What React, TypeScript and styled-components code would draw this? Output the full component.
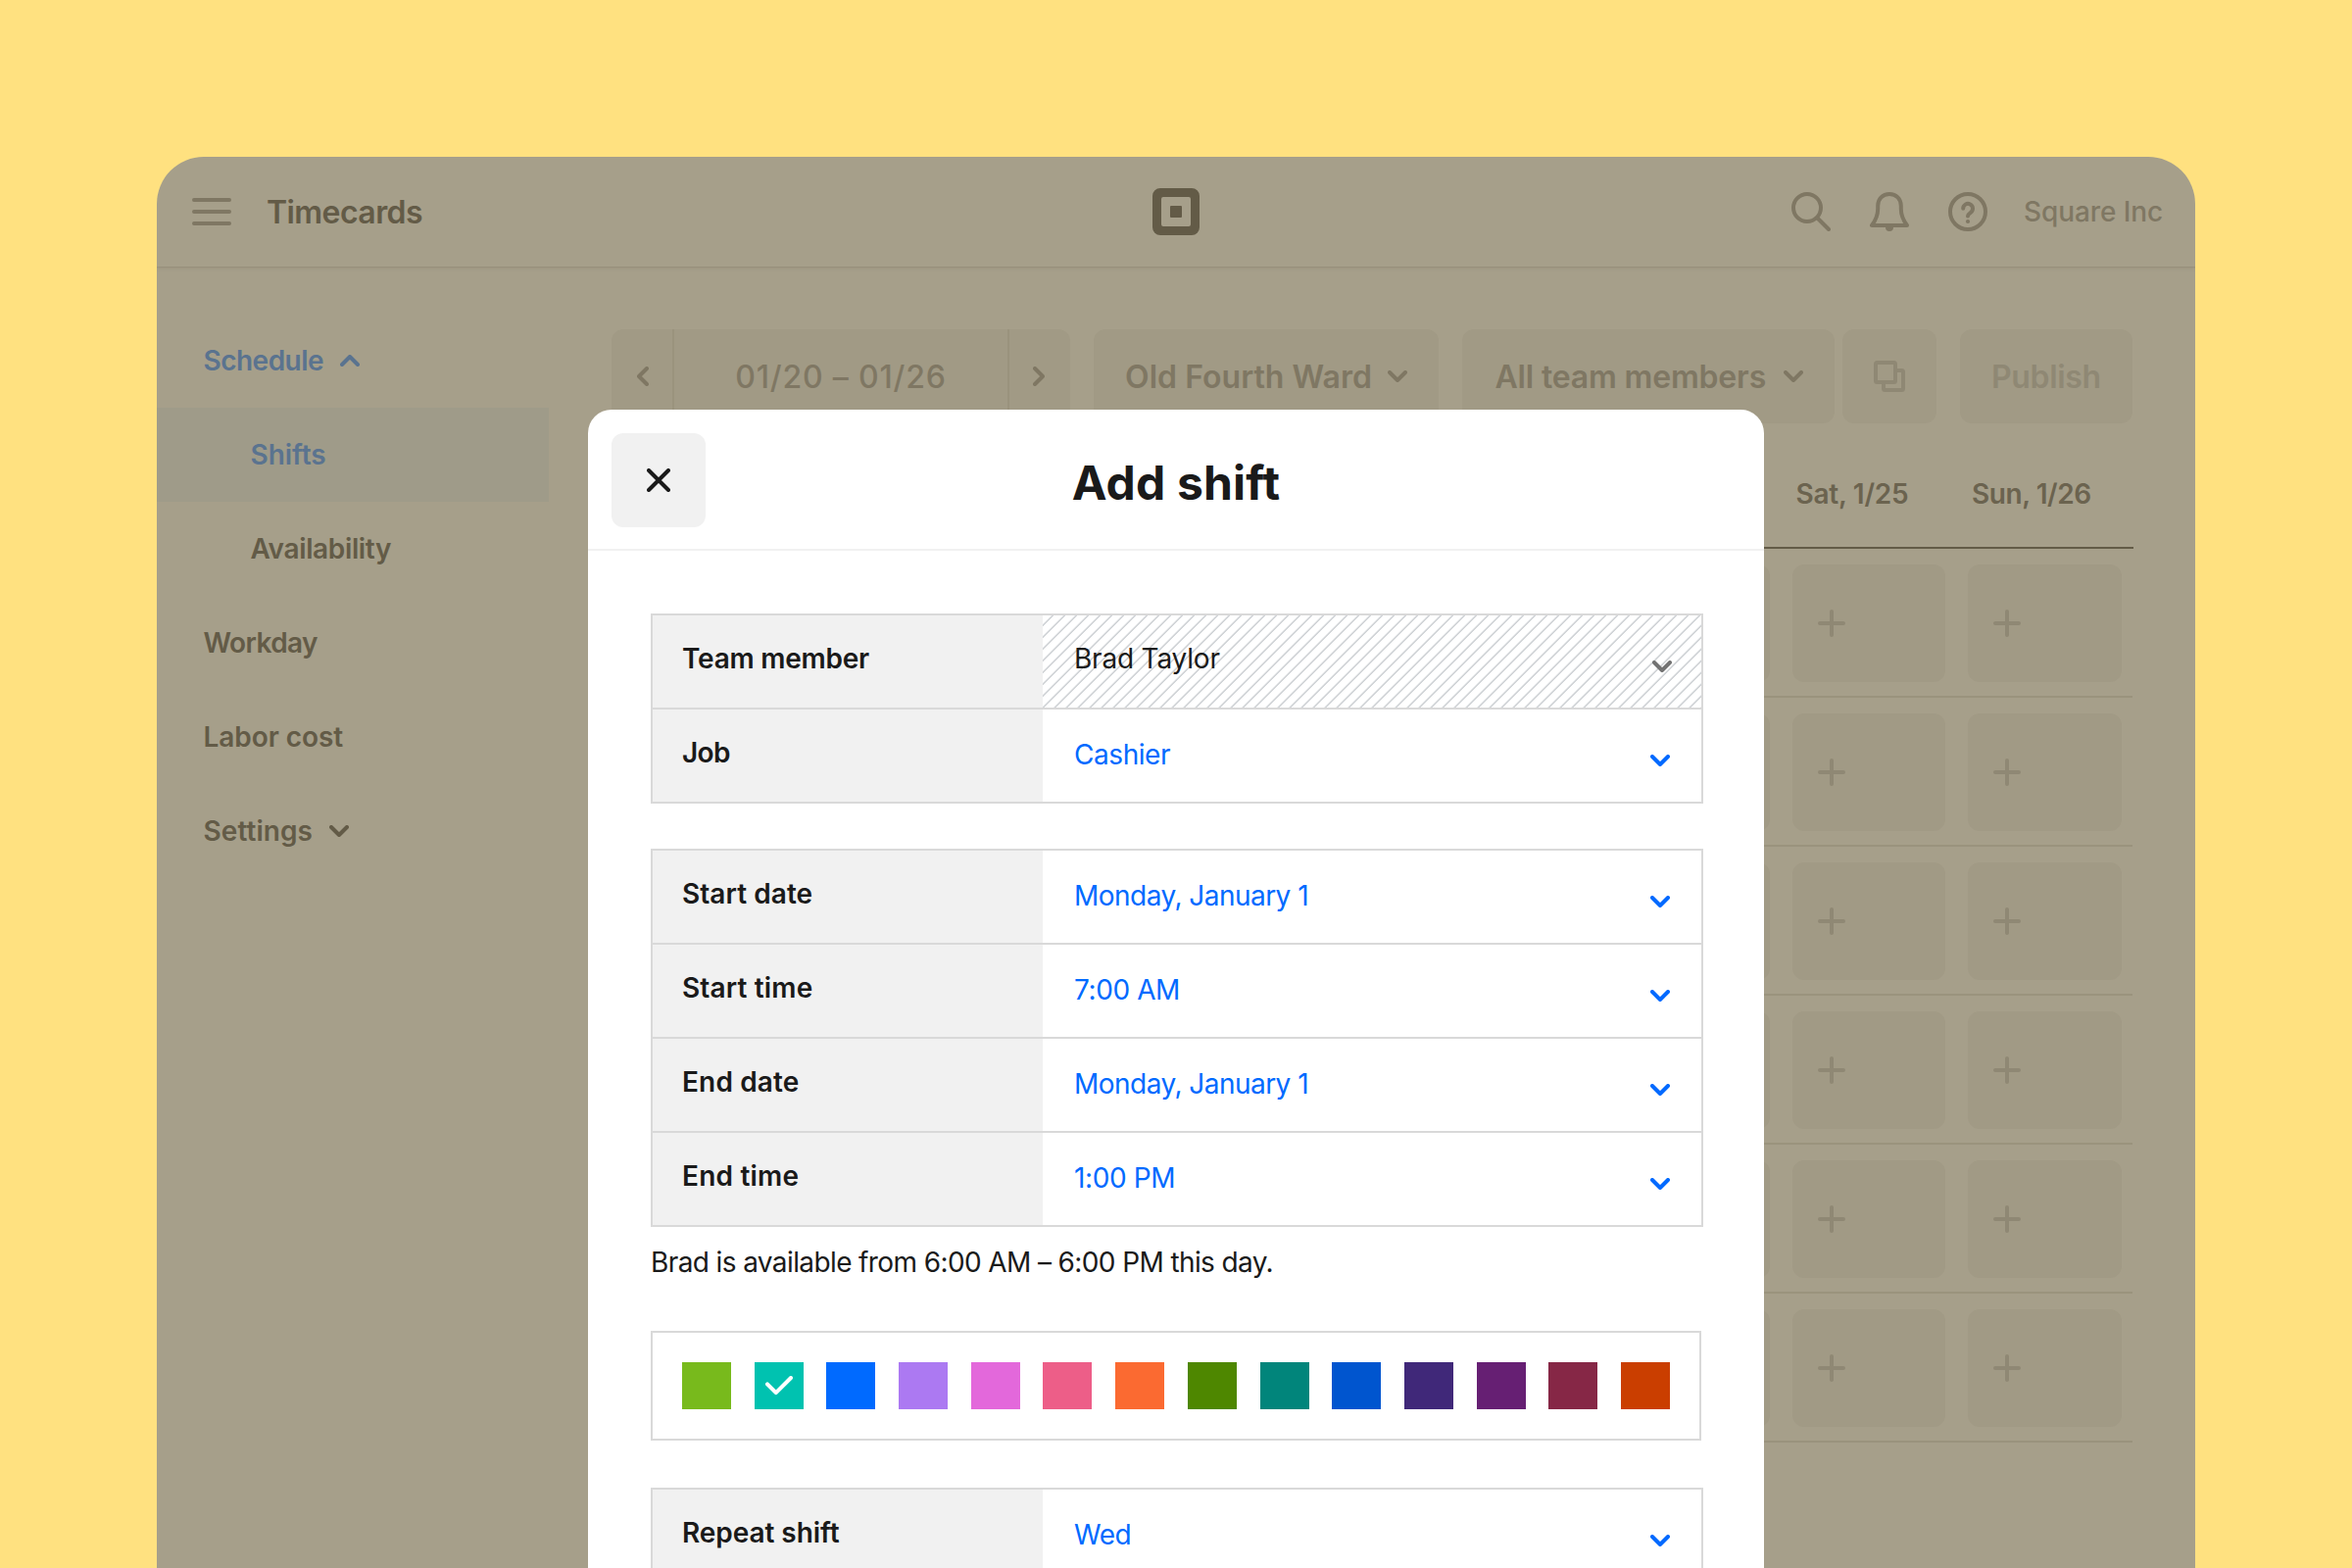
import React from "react";
import styled, { createGlobalStyle } from "styled-components";

const color = {
  page: "#ffe180",
  dimmed: "#a69f8a",
  dimmedFill: "#a19a85",
  dimmedLine: "#9a937d",
  dimmedInk: "#635b47",
  dimmedInkSoft: "#6b634f",
  dimmedIcon: "#7f7763",
  dimmedFaint: "#8f8874",
  dimmedBlue: "#5a738f",
  dimmedActive: "#9f9b89",
  ink: "#1a1a1a",
  blue: "#006aff",
  grey: "#737373",
  line: "#d9d9d9",
  fill: "#f1f1f1",
};

const GlobalStyle = createGlobalStyle`
  *, *::before, *::after { box-sizing: border-box; }
  body {
    margin: 0;
    background: ${color.page};
    font-family: Inter, "Liberation Sans", sans-serif;
    font-size: 28px;
    line-height: 34px;
    overflow: hidden;
  }
  svg { display: block; flex: none; }
`;

const Page = styled.div`
  width: 2400px;
  height: 1600px;
  padding: 160px 160px 0;
  overflow: hidden;
`;

const Device = styled.div`
  position: relative;
  height: 1440px;
  border-radius: 48px 48px 0 0;
  background: ${color.dimmed};
  color: ${color.dimmedInk};
  overflow: hidden;
`;

const TopBar = styled.header`
  display: grid;
  grid-template-columns: 1fr auto 1fr;
  align-items: center;
  height: 112px;
  box-shadow: 0 1px 1px rgba(99, 91, 71, 0.12), 0 2px 4px rgba(99, 91, 71, 0.12);
  color: ${color.dimmedIcon};
`;

const Brand = styled.div`
  display: flex;
  align-items: center;
  gap: 36px;
  padding-left: 36px;
`;

const Tracked = styled.span<{ $ls: number }>`
  letter-spacing: ${(p) => p.$ls}px;
  white-space: nowrap;
`;

const LargeLabel = styled(Tracked)`
  padding-top: 2px;
  font-size: 32px;
  line-height: 40px;
`;

const BrandName = styled(LargeLabel)`
  font-weight: 600;
  color: ${color.dimmedInk};
`;

const Tools = styled.div`
  display: flex;
  align-items: center;
  justify-self: end;
  width: 412px;
  gap: 40px;
`;

const Account = styled(Tracked)`
  font-weight: 500;
  margin-left: -3px;
`;

const Body = styled.div`
  display: flex;
`;

const Sidebar = styled.nav`
  display: flex;
  flex-direction: column;
  width: 400px;
  padding-top: 48px;
`;

const NavItem = styled.div<{ $nested?: boolean; $active?: boolean; $blue?: boolean }>`
  display: flex;
  align-items: center;
  height: 96px;
  padding-left: ${(p) => (p.$nested ? 95.5 : 47.5)}px;
  background: ${(p) => (p.$active ? color.dimmedActive : "transparent")};
  color: ${(p) => (p.$blue ? color.dimmedBlue : color.dimmedInk)};
  font-weight: 600;
`;

const NavLabel = styled(Tracked)`
  margin-right: 17px;
`;

const Content = styled.main`
  flex: 1;
  padding: 64px 64px 0;
`;

const Toolbar = styled.div`
  display: flex;
  font-weight: 600;
  color: ${color.dimmedIcon};
`;

const ToolButton = styled.div<{ $width: number; $gap?: number; $faint?: boolean; $lead?: number }>`
  display: flex;
  align-items: center;
  justify-content: space-between;
  width: ${(p) => p.$width}px;
  height: 96px;
  margin-left: ${(p) => p.$gap ?? 24}px;
  padding: 0 32px 0 ${(p) => p.$lead ?? 32}px;
  border-radius: 12px;
  background: ${color.dimmedFill};
  color: ${(p) => (p.$faint ? color.dimmedFaint : color.dimmedIcon)};
`;

const DateStepper = styled.div`
  display: flex;
  width: 468px;
  height: 96px;
  border-radius: 12px;
  background: ${color.dimmedFill};
`;

const StepButton = styled.div<{ $lead: number }>`
  display: flex;
  align-items: center;
  width: 62px;
  padding-left: ${(p) => p.$lead}px;
`;

const DateRange = styled.div`
  display: flex;
  align-items: center;
  justify-content: center;
  width: 344px;
  border: solid ${color.dimmedLine};
  border-width: 0 2px;
  font-weight: 500;
`;

const ScheduleGrid = styled.section`
  margin-top: 16px;
  width: 1552px;
`;

const GridRow = styled.div<{ $head?: boolean }>`
  display: flex;
  justify-content: flex-end;
  gap: 23px;
  width: ${(p) => (p.$head ? 1553 : 1552)}px;
  height: ${(p) => (p.$head ? 112 : 152)}px;
  padding: ${(p) => (p.$head ? "39px 12.5px 0 0" : "16px 11.5px 0 0")};
  border-bottom: 2px solid ${(p) => (p.$head ? color.dimmedInk : color.dimmedLine)};
`;

const DayHeading = styled.div`
  width: 156.5px;
  padding-left: 4px;
  font-weight: 600;
  color: ${color.dimmedInkSoft};
`;

const ShiftCell = styled.div`
  display: flex;
  align-items: center;
  width: 156.5px;
  height: 120px;
  padding-left: 26px;
  border-radius: 12px;
  background: ${color.dimmedFill};
  color: ${color.dimmedFaint};
`;

const Modal = styled.div`
  position: absolute;
  top: 258px;
  left: 440px;
  width: 1200px;
  height: 1182px;
  border-radius: 24px 24px 0 0;
  background: #fff;
  color: ${color.ink};
  overflow: hidden;
`;

const ModalHeader = styled.header`
  display: grid;
  grid-template-columns: 96px 1fr 96px;
  height: 144px;
  padding: 24px 24px 0;
  border-bottom: 2px solid ${color.fill};
`;

const CloseButton = styled.button`
  display: flex;
  align-items: center;
  justify-content: center;
  width: 96px;
  height: 96px;
  padding: 0;
  border: 0;
  border-radius: 12px;
  background: ${color.fill};
  color: ${color.ink};
`;

const ModalTitle = styled.h1`
  margin: 0;
  padding-top: 21px;
  font-size: 48px;
  line-height: 60px;
  font-weight: 700;
  text-align: center;
  letter-spacing: 0.16px;
`;

const ModalBody = styled.div`
  display: flex;
  flex-direction: column;
  padding: 64px 62px 0 64px;
`;

const FieldTable = styled.div<{ $gap?: number }>`
  margin-top: ${(p) => p.$gap ?? 0}px;
  border: 2px solid ${color.line};
`;

const FieldRow = styled.div`
  display: flex;
  height: 96px;
  border-bottom: 2px solid ${color.line};
  &:last-child {
    height: 94px;
    border-bottom: 0;
  }
`;

const FieldLabel = styled.div`
  width: 398px;
  padding: 27px 0 0 30px;
  background: ${color.fill};
  font-weight: 600;
`;

const FieldValue = styled.div<{ $locked?: boolean }>`
  display: flex;
  flex: 1;
  align-items: flex-start;
  justify-content: space-between;
  padding: ${(p) => (p.$locked ? "27px 30px 0 32px" : "29px 32px 0 32px")};
  color: ${(p) => (p.$locked ? color.ink : color.blue)};
  ${(p) =>
    p.$locked &&
    `background: repeating-linear-gradient(135deg, #fff 0, #fff 6.1px, #d3d6d9 6.8px, #d3d6d9 8.1px, #fff 8.485px);`}
`;

const Caret = styled.span<{ $locked?: boolean }>`
  margin-top: ${(p) => (p.$locked ? 19 : 17)}px;
  color: ${(p) => (p.$locked ? color.grey : "inherit")};
`;

const Note = styled.p`
  margin: 19px 0 0;
`;

const Palette = styled.div`
  display: flex;
  align-items: center;
  justify-content: space-between;
  width: 1072px;
  height: 112px;
  margin-top: 53px;
  padding: 0 30px;
  border: 2px solid ${color.line};
`;

const Swatch = styled.div<{ $fill: string }>`
  width: 50px;
  height: 48px;
  padding: 14px 0 0 11px;
  background: ${(p) => p.$fill};
  color: #fff;
`;

const stroke = {
  fill: "none",
  stroke: "currentColor",
  strokeWidth: 4,
  strokeLinecap: "round",
  strokeLinejoin: "round",
} as const;

const ChevronDown = () => (
  <svg width="20" height="12" viewBox="0 0 20 12" {...stroke}><path d="M2 2l8 8 8-8" /></svg>
);
const ChevronUp = () => (
  <svg width="20" height="12" viewBox="0 0 20 12" {...stroke}><path d="M2 10l8-8 8 8" /></svg>
);
const ChevronLeft = () => (
  <svg width="12" height="20" viewBox="0 0 12 20" {...stroke}><path d="M10 2l-8 8 8 8" /></svg>
);
const ChevronRight = () => (
  <svg width="12" height="20" viewBox="0 0 12 20" {...stroke}><path d="M2 2l8 8-8 8" /></svg>
);
const MenuIcon = () => (
  <svg width="40" height="28" viewBox="0 0 40 28" {...stroke}><path d="M2 2h36M2 14h36M2 26h36" /></svg>
);
const SearchIcon = () => (
  <svg width="40" height="40" viewBox="0 0 40 40" {...stroke}>
    <circle cx="16" cy="16" r="14" />
    <path d="M26.5 26.5L38 38" />
  </svg>
);
const BellIcon = () => (
  <svg width="40" height="40" viewBox="0 0 40 40" {...stroke}>
    <path d="M20 2C13 2 8.200 7 8.200 14v3c0 6-2.400 12-6.200 17h36c-3.800-5-6.200-11-6.200-17v-3C31.800 7 27 2 20 2z" />
    <path d="M16 36a4 4 0 0 0 8 0z" fill="currentColor" stroke="none" />
  </svg>
);
const HelpIcon = () => (
  <svg width="40" height="40" viewBox="0 0 40 40" {...stroke}>
    <circle cx="20" cy="20" r="18" />
    <path d="M15.200 16.800a4.900 4.900 0 1 1 7.700 4c-1.900 1.300-2.800 2-2.900 3.700" />
    <circle cx="20" cy="30" r="2.100" fill="currentColor" stroke="none" />
  </svg>
);
const CopyIcon = () => (
  <svg width="32" height="32" viewBox="0 0 32 32" {...stroke}>
    <rect x="2" y="2" width="20" height="20" rx="1.500" />
    <path d="M24 10h4.500a1.500 1.500 0 0 1 1.500 1.500v17a1.500 1.500 0 0 1-1.500 1.500h-17a1.500 1.500 0 0 1-1.500-1.500V24" strokeLinecap="butt" />
  </svg>
);
const PlusIcon = () => (
  <svg width="28" height="28" viewBox="0 0 28 28" {...stroke}><path d="M14 2v24M2 14h24" /></svg>
);
const CloseIcon = () => (
  <svg width="24" height="24" viewBox="0 0 24 24" {...stroke}><path d="M2 2l20 20M22 2L2 22" /></svg>
);
const CheckIcon = () => (
  <svg width="28" height="20" viewBox="0 0 28 20" {...stroke}><path d="M2 8.400l8.800 8.800L26 2" /></svg>
);
const SquareLogo = () => (
  <svg width="48" height="48" viewBox="0 0 48 48" fill={color.dimmedInk}>
    <path
      fillRule="evenodd"
      d="M8 0h32a8 8 0 0 1 8 8v32a8 8 0 0 1-8 8H8a8 8 0 0 1-8-8V8a8 8 0 0 1 8-8zM11 9a2 2 0 0 0-2 2v26a2 2 0 0 0 2 2h26a2 2 0 0 0 2-2V11a2 2 0 0 0-2-2z"
    />
    <rect x="18" y="18" width="12" height="12" rx="1" />
  </svg>
);

type Field = { label: string; labelLs: number; value: string; valueLs: number; locked?: boolean };

const who: Field[] = [
  { label: "Team member", labelLs: -0.25, value: "Brad Taylor", valueLs: -0.2, locked: true },
  { label: "Job", labelLs: -0.7, value: "Cashier", valueLs: -0.44 },
];
const when: Field[] = [
  { label: "Start date", labelLs: 0.06, value: "Monday, January 1", valueLs: -0.53 },
  { label: "Start time", labelLs: 0.15, value: "7:00 AM", valueLs: -0.4 },
  { label: "End date", labelLs: 0.15, value: "Monday, January 1", valueLs: -0.53 },
  { label: "End time", labelLs: 0.2, value: "1:00 PM", valueLs: -0.4 },
];
const repeat: Field[] = [
  { label: "Repeat shift", labelLs: -0.06, value: "Wed", valueLs: -0.5 },
];

const swatches = [
  "#78ba1c", "#00c2b0", "#006aff", "#ac79f2", "#e368db", "#ed5e88", "#fb6a31",
  "#4e8700", "#01857b", "#0055cf", "#402879", "#661f73", "#862746", "#ca3e00",
];

const weekRows = [0, 1, 2, 3, 4, 5];
const dayColumns = [0, 1, 2, 3, 4, 5, 6];

function Fields({ items, gap }: { items: Field[]; gap?: number }) {
  return (
    <FieldTable $gap={gap}>
      {items.map((f) => (
        <FieldRow key={f.label}>
          <FieldLabel><Tracked $ls={f.labelLs}>{f.label}</Tracked></FieldLabel>
          <FieldValue $locked={f.locked}>
            <Tracked $ls={f.valueLs}>{f.value}</Tracked>
            <Caret $locked={f.locked}><ChevronDown /></Caret>
          </FieldValue>
        </FieldRow>
      ))}
    </FieldTable>
  );
}

export default function App() {
  return (
    <Page>
      <GlobalStyle />
      <Device>
        <TopBar>
          <Brand>
            <MenuIcon />
            <BrandName $ls={-0.57}>Timecards</BrandName>
          </Brand>
          <SquareLogo />
          <Tools>
            <SearchIcon />
            <BellIcon />
            <HelpIcon />
            <Account $ls={-0.09}>Square Inc</Account>
          </Tools>
        </TopBar>
        <Body>
          <Sidebar>
            <NavItem $blue><NavLabel $ls={-0.52}>Schedule</NavLabel><ChevronUp /></NavItem>
            <NavItem $nested $active $blue><NavLabel $ls={-0.07}>Shifts</NavLabel></NavItem>
            <NavItem $nested><NavLabel $ls={-0.36}>Availability</NavLabel></NavItem>
            <NavItem><NavLabel $ls={-0.6}>Workday</NavLabel></NavItem>
            <NavItem><NavLabel $ls={-0.07}>Labor cost</NavLabel></NavItem>
            <NavItem><NavLabel $ls={0.07}>Settings</NavLabel><ChevronDown /></NavItem>
          </Sidebar>
          <Content>
            <Toolbar>
              <DateStepper>
                <StepButton $lead={26}><ChevronLeft /></StepButton>
                <DateRange><LargeLabel $ls={0.82}>01/20 – 01/26</LargeLabel></DateRange>
                <StepButton $lead={24}><ChevronRight /></StepButton>
              </DateStepper>
              <ToolButton $width={352}><LargeLabel $ls={0.04}>Old Fourth Ward</LargeLabel><ChevronDown /></ToolButton>
              <ToolButton $width={380} $lead={33.5}><LargeLabel $ls={-0.17}>All team members</LargeLabel><ChevronDown /></ToolButton>
              <ToolButton $width={96} $gap={8} $faint><CopyIcon /></ToolButton>
              <ToolButton $width={176} $faint><LargeLabel $ls={-0.34}>Publish</LargeLabel></ToolButton>
            </Toolbar>
            <ScheduleGrid>
              <GridRow $head>
                <DayHeading><Tracked $ls={-0.25}>Sat, 1/25</Tracked></DayHeading>
                <DayHeading><Tracked $ls={-0.45}>Sun, 1/26</Tracked></DayHeading>
              </GridRow>
              {weekRows.map((row) => (
                <GridRow key={row}>
                  {dayColumns.map((day) => (
                    <ShiftCell key={day}><PlusIcon /></ShiftCell>
                  ))}
                </GridRow>
              ))}
            </ScheduleGrid>
          </Content>
        </Body>
        <Modal>
          <ModalHeader>
            <CloseButton aria-label="Close"><CloseIcon /></CloseButton>
            <ModalTitle>Add shift</ModalTitle>
          </ModalHeader>
          <ModalBody>
            <Fields items={who} />
            <Fields items={when} gap={46} />
            <Note><Tracked $ls={-0.61}>Brad is available from 6:00 AM – 6:00 PM this day.</Tracked></Note>
            <Palette>
              {swatches.map((fill, i) => (
                <Swatch key={fill} $fill={fill}>{i === 1 && <CheckIcon />}</Swatch>
              ))}
            </Palette>
            <Fields items={repeat} gap={48} />
          </ModalBody>
        </Modal>
      </Device>
    </Page>
  );
}
